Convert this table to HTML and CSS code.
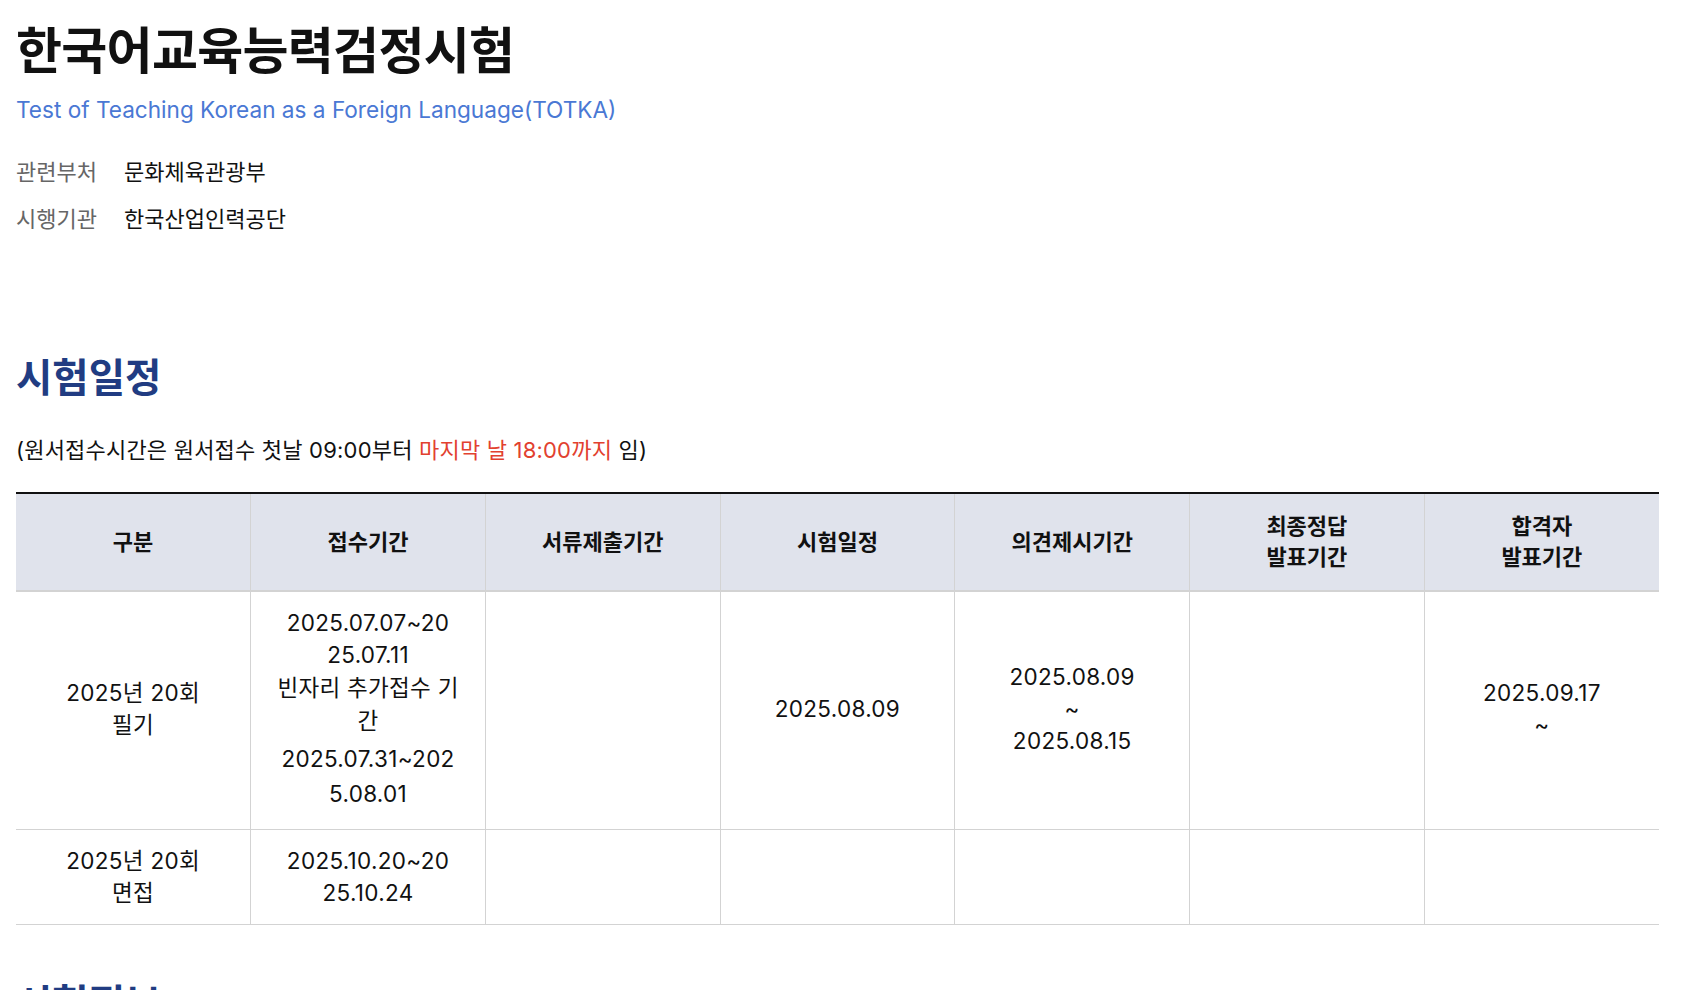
FILE: index.html
```html
<!DOCTYPE html>
<html lang="ko">
<head>
<meta charset="utf-8">
<title>한국어교육능력검정시험</title>
<link rel="stylesheet" href="styles.css">
</head>
<body>
<div class="page">
  <header class="exam-head">
    <h1 class="exam-title">한국어교육능력검정시험</h1>
    <p class="exam-sub">Test of Teaching Korean as a Foreign Language(TOTKA)</p>
    <dl class="exam-info">
      <div class="info-row"><dt>관련부처</dt><dd>문화체육관광부</dd></div>
      <div class="info-row"><dt>시행기관</dt><dd>한국산업인력공단</dd></div>
    </dl>
  </header>

  <section class="schedule">
    <h2 class="sec-title">시험일정</h2>
    <p class="note">(원서접수시간은 원서접수 첫날 09:00부터 <span class="red">마지막 날 18:00까지</span> 임)</p>
    <table class="sched-table">
      <thead>
        <tr>
          <th>구분</th>
          <th>접수기간</th>
          <th>서류제출기간</th>
          <th>시험일정</th>
          <th>의견제시기간</th>
          <th>최종정답<br>발표기간</th>
          <th>합격자<br>발표기간</th>
        </tr>
      </thead>
      <tbody>
        <tr class="row-written">
          <td>2025년 20회<br>필기</td>
          <td>
            <span class="blk blk-a">2025.07.07~20<br>25.07.11</span>
            <span class="blk blk-b">빈자리 추가접수 기<br>간</span>
            <span class="blk blk-c">2025.07.31~202<br>5.08.01</span>
          </td>
          <td></td>
          <td>2025.08.09</td>
          <td>2025.08.09<br>~<br>2025.08.15</td>
          <td></td>
          <td>2025.09.17<br>~</td>
        </tr>
        <tr>
          <td>2025년 20회<br>면접</td>
          <td>2025.10.20~20<br>25.10.24</td>
          <td></td>
          <td></td>
          <td></td>
          <td></td>
          <td></td>
        </tr>
      </tbody>
    </table>
  </section>

  <section class="info-sec">
    <h2 class="sec-title">시험정보</h2>
  </section>
</div>
</body>
</html>
```

FILE: styles.css
```css
* { box-sizing: border-box; }
html, body {
  margin: 0;
  padding: 0;
  background: #fff;
}
body {
  font-family: Inter, "Noto Sans CJK KR", sans-serif;
  color: #111;
}
.page {
  padding: 21px 22px 0 16px;
}
.exam-title {
  margin: 0;
  font-size: 50px;
  line-height: 60px;
  font-weight: 700;
  letter-spacing: -0.7px;
  color: #111;
}
.exam-sub {
  margin: 13px 0 0;
  font-size: 22.6px;
  line-height: 32px;
  color: #4a78d4;
}
.exam-info {
  margin: 31px 0 0;
  display: flex;
  flex-direction: column;
  gap: 17px;
}
.info-row {
  display: flex;
  font-size: 22px;
  line-height: 30px;
}
.info-row dt {
  width: 108px;
  color: #666;
}
.info-row dd {
  margin: 0;
  color: #111;
}
.schedule {
  margin-top: 120px;
}
.sec-title {
  margin: 0;
  font-size: 39.5px;
  line-height: 48px;
  font-weight: 700;
  color: #213c82;
}
.note {
  margin: 33px 0 0;
  font-size: 22px;
  line-height: 30px;
  letter-spacing: 0.2px;
  color: #111;
}
.red { color: #e2412f; }
.sched-table {
  margin-top: 27px;
  width: 100%;
  table-layout: fixed;
  border-collapse: collapse;
  border-top: 2px solid #111;
  font-size: 22px;
  text-align: center;
}
.sched-table th {
  background: #e0e3ec;
  font-weight: 700;
  line-height: 31px;
  padding: 17px 10px 17px;
  border-left: 1px solid #d3d3d3;
  border-bottom: 2px solid #d3d3d3;
}
.sched-table th:first-child,
.sched-table td:first-child { border-left: none; }
.sched-table td {
  font-size: 22.5px;
  letter-spacing: 0.3px;
  line-height: 32px;
  padding: 15px 10px;
  border-left: 1px solid #d3d3d3;
  border-bottom: 1px solid #d3d3d3;
  vertical-align: middle;
  font-weight: 400;
}
.row-written td { padding-bottom: 18px; }
.blk { display: block; }
.blk-b { line-height: 33px; }
.blk-c { line-height: 35px; margin-top: 4px; }
.info-sec {
  margin-top: 55px;
}
```
